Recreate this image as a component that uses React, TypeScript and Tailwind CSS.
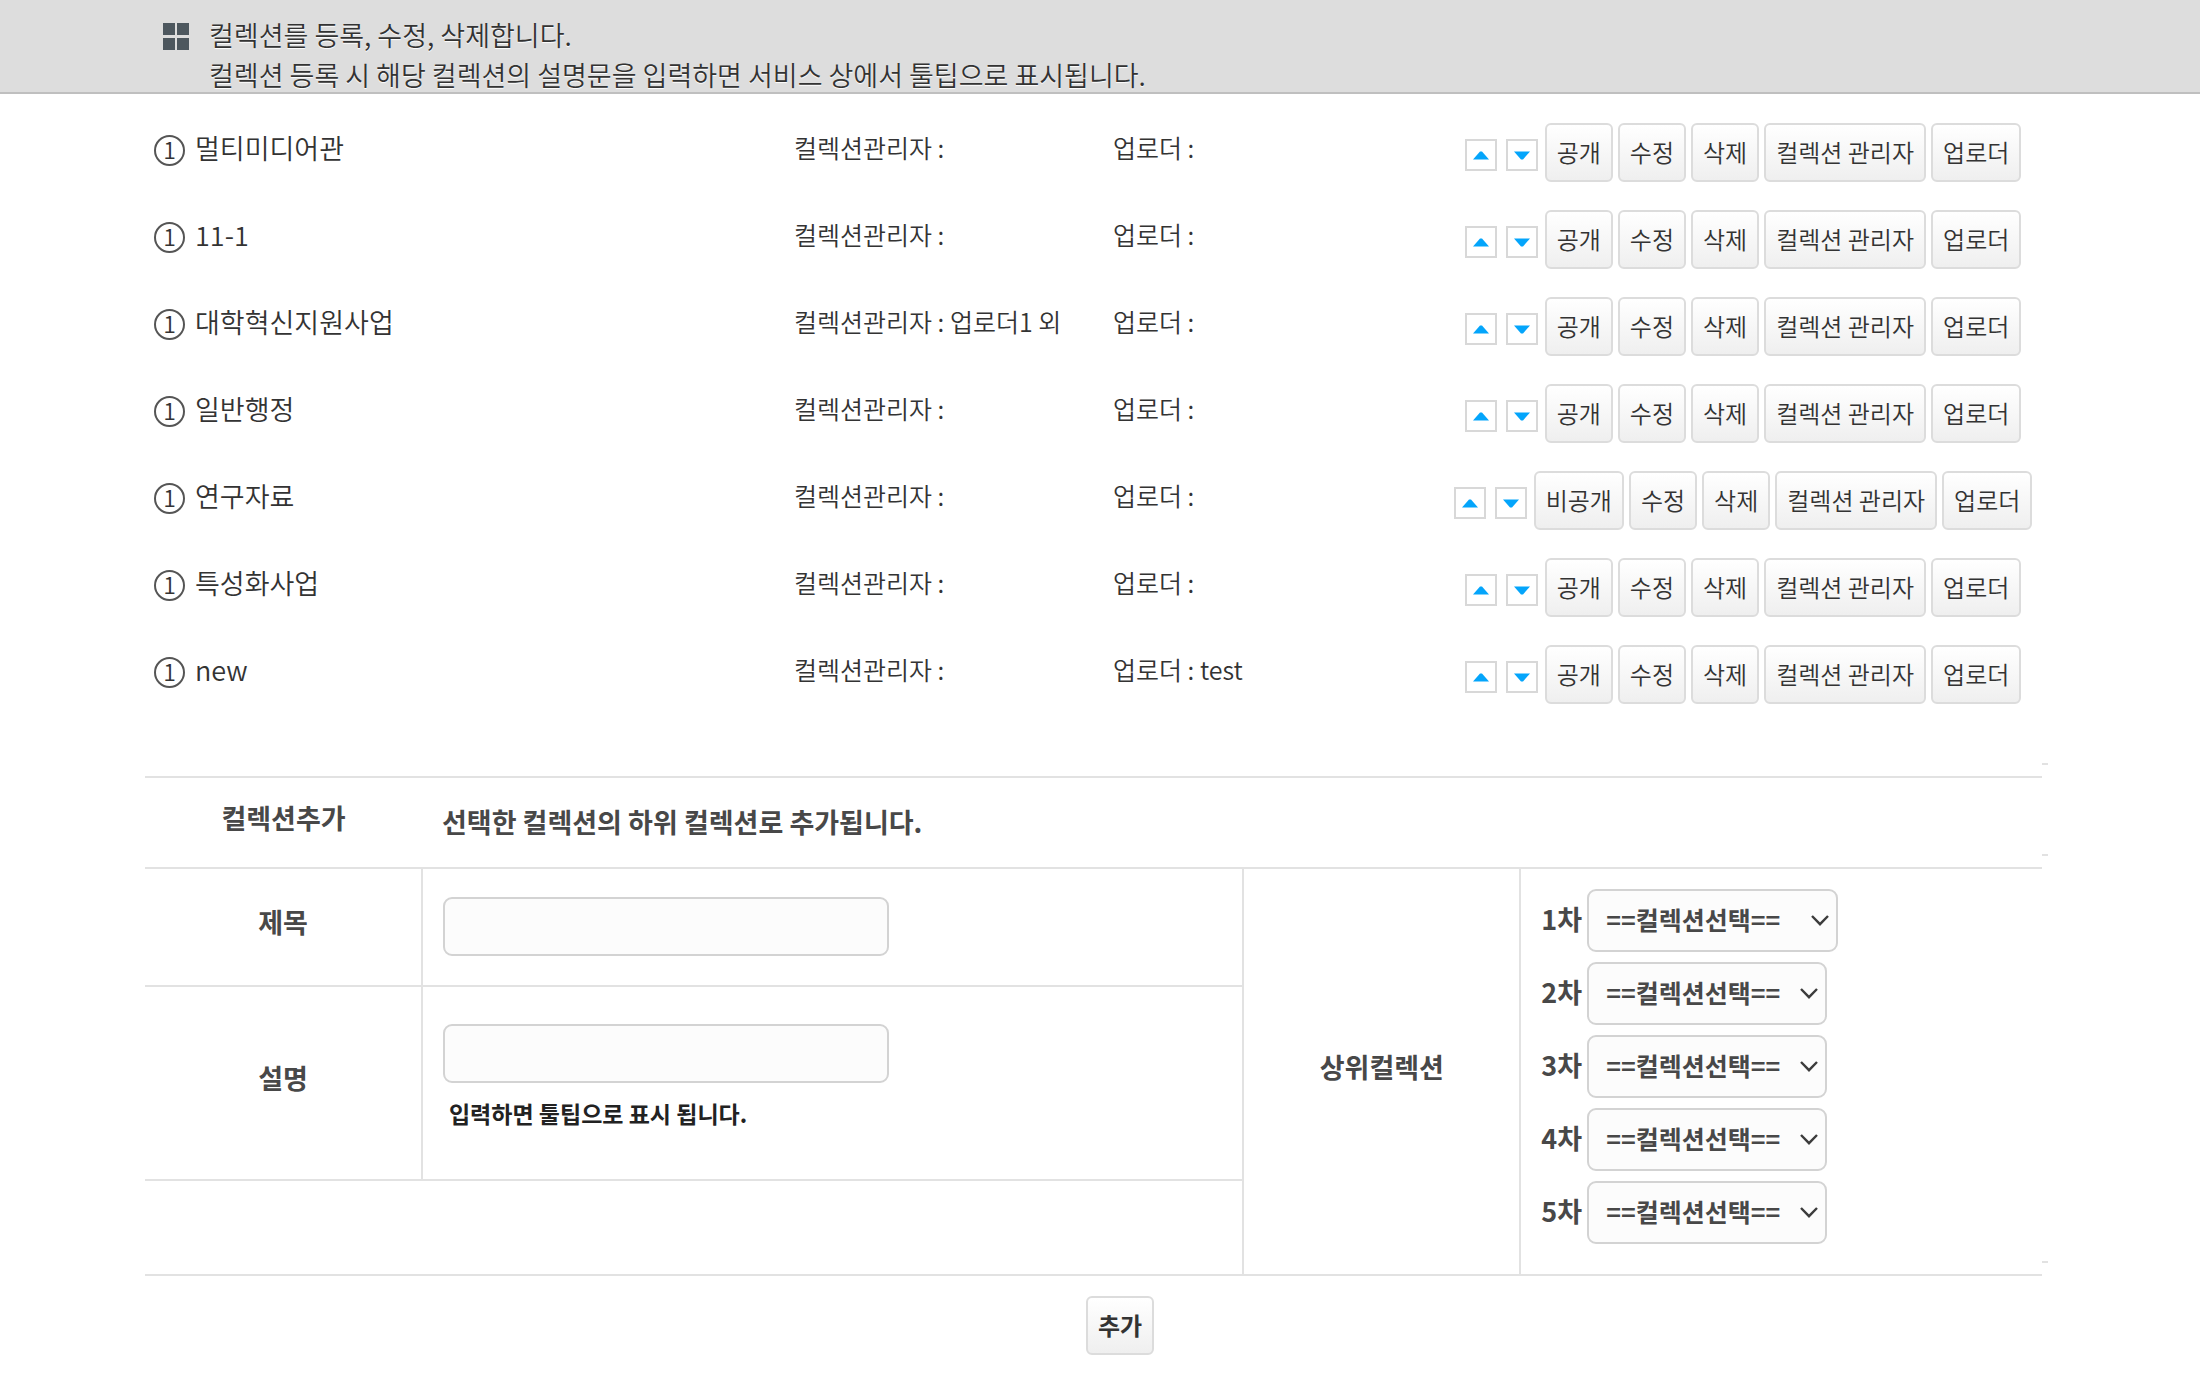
import React from "react";

const rows = [
  { name: "멀티미디어관", manager: "", uploader: "", open: true },
  { name: "11-1", manager: "", uploader: "", open: true },
  { name: "대학혁신지원사업", manager: "업로더1 외", uploader: "", open: true },
  { name: "일반행정", manager: "", uploader: "", open: true },
  { name: "연구자료", manager: "", uploader: "", open: false },
  { name: "특성화사업", manager: "", uploader: "", open: true },
  { name: "new", manager: "", uploader: "test", open: true },
];

function Action({ children, bold = false }: { children: React.ReactNode; bold?: boolean }) {
  return (
    <button
      type="button"
      className={
        "h-[59px] shrink-0 whitespace-nowrap rounded-md border-2 border-[#dcdcdc] bg-linear-to-b from-white to-[#efefef] px-[10px] pb-px text-[24px] leading-[36px] text-[#333] " +
        (bold ? "font-bold" : "font-[350]")
      }
    >
      {children}
    </button>
  );
}

function Arrow({ up, name }: { up: boolean; name: string }) {
  return (
    <button
      type="button"
      aria-label={name + (up ? " 위로" : " 아래로")}
      className="flex size-8 shrink-0 items-center justify-center border-2 border-[#d8d8d8] bg-white"
    >
      <svg viewBox="0 0 16 9" className="h-[9px] w-4 fill-[#04a5fb]">
        <path d={up ? "M7 0.5h2L16 8.5H0z" : "M0 0.5h16L9 8.5H7z"} />
      </svg>
    </button>
  );
}

function ParentSelect({ level }: { level: number }) {
  const id = "parent-" + level;
  return (
    <div className="flex items-center gap-1">
      <label htmlFor={id} className="w-[42px] whitespace-nowrap pb-0.5">
        {level}차
      </label>
      <div className={"relative " + (level === 1 ? "w-[251px]" : "w-[240px]")}>
        <select
          id={id}
          className="block h-[63px] w-full appearance-none rounded-[9px] border-2 border-[#d3d3d3] bg-[#fcfcfc] px-[17px] pb-px text-[25px] font-bold"
        >
          <option>==컬렉션선택==</option>
        </select>
        <svg viewBox="0 0 18 11" className="pointer-events-none absolute right-[9px] top-[26px] h-[11px] w-[18px] fill-none stroke-[#3c3c3c] stroke-[2.4]">
          <path d="M1 1l8 8.2L17 1" />
        </svg>
      </div>
    </div>
  );
}

export default function App() {
  return (
    <div className="min-h-screen bg-white font-['Noto_Sans_CJK_KR',sans-serif] text-[#333]">
      <header className="flex h-[94px] gap-5 overflow-hidden border-b-2 border-[#bfbfbf] bg-[#ddd] pl-[163px] pt-[15px]">
        <svg viewBox="0 0 26 27" className="mt-2 h-[27px] w-[26px] shrink-0 fill-[#4d575e]">
          <path d="M0 0h12v12H0zM14 0h12v12H14zM0 15h12v12H0zM14 15h12v12H14z" />
        </svg>
        <p className="text-[27px] font-[350] leading-[40px] [text-shadow:0_1px_1px_#fff]">
          컬렉션를 등록, 수정, 삭제합니다.
          <br />
          컬렉션 등록 시 해당 컬렉션의 설명문을 입력하면 서비스 상에서 툴팁으로 표시됩니다.
        </p>
      </header>

      <main className="ml-[145px] mr-[158px]">
        <ul className="pt-[15px]">
          {rows.map((r) => (
            <li key={r.name} className="grid h-[87px] grid-cols-[649fr_319fr_331fr_598fr] items-center">
              <div className="flex items-center gap-[10px] pb-2 pl-[9px] text-[27px] font-[350]">
                <span className="mt-1 flex size-[31px] items-center justify-center rounded-full border-2 border-[#555] pb-0.5 text-[23px] leading-none">
                  1
                </span>
                {r.name}
              </div>
              <div className="whitespace-nowrap pb-[9px] text-[25px] font-[350]">컬렉션관리자 : {r.manager}</div>
              <div className="whitespace-nowrap pb-[9px] text-[25px] font-[350]">업로더 : {r.uploader}</div>
              <div className="flex items-center justify-center gap-[7px]">
                <div className="mt-[5px] flex gap-[9px]">
                  <Arrow up name={r.name} />
                  <Arrow up={false} name={r.name} />
                </div>
                <div className="flex gap-[5px]">
                  <Action>{r.open ? "공개" : "비공개"}</Action>
                  <Action>수정</Action>
                  <Action>삭제</Action>
                  <Action>컬렉션 관리자</Action>
                  <Action>업로더</Action>
                </div>
              </div>
            </li>
          ))}
        </ul>

        <form onSubmit={(e) => e.preventDefault()}>
          <div className="-mr-[6px] flex h-[58px] items-end justify-end pb-[11px]">
            <span className="h-0.5 w-[6px] bg-[#e2e2e2]" />
          </div>
          <table className="w-full table-fixed border-collapse text-[27px] font-bold text-[#484848]">
            <colgroup>
              <col className="w-[14.6%]" />
              <col className="w-[43.3%]" />
              <col className="w-[14.6%]" />
              <col />
            </colgroup>
            <tbody>
              <tr className="h-[91px] border-y-2 border-[#e2e2e2]">
                <th scope="row" className="pb-[9px]">컬렉션추가</th>
                <td colSpan={3} className="relative pl-5">
                  선택한 컬렉션의 하위 컬렉션로 추가됩니다.
                  <span className="absolute -right-[6px] bottom-[11px] h-0.5 w-[6px] bg-[#e2e2e2]" />
                </td>
              </tr>
              <tr className="h-[118px]">
                <th scope="row" className="border-b-2 border-r-2 border-[#e2e2e2] pb-[10px]">
                  <label htmlFor="title">제목</label>
                </th>
                <td className="border-b-2 border-[#e2e2e2] pb-0.5 pl-5">
                  <input id="title" type="text" className="block h-[59px] w-[446px] rounded-[9px] border-2 border-[#d3d3d3] bg-[#fcfcfc] px-4" />
                </td>
                <th scope="row" rowSpan={3} className="border-x-2 border-b-2 border-[#e2e2e2] pb-2">
                  상위컬렉션
                </th>
                <td rowSpan={3} className="relative border-b-2 border-[#e2e2e2] pb-[10px] pl-5">
                  <div className="flex flex-col gap-[10px]">
                    <ParentSelect level={1} />
                    <ParentSelect level={2} />
                    <ParentSelect level={3} />
                    <ParentSelect level={4} />
                    <ParentSelect level={5} />
                  </div>
                  <span className="absolute -right-[6px] bottom-[11px] h-0.5 w-[6px] bg-[#e2e2e2]" />
                </td>
              </tr>
              <tr className="h-[194px]">
                <th scope="row" className="border-b-2 border-r-2 border-[#e2e2e2] pb-[10px]">
                  <label htmlFor="description">설명</label>
                </th>
                <td className="border-b-2 border-[#e2e2e2] pb-3 pl-5">
                  <input id="description" type="text" aria-describedby="description-note" className="block h-[59px] w-[446px] rounded-[9px] border-2 border-[#d3d3d3] bg-[#fcfcfc] px-4" />
                  <p id="description-note" className="mt-3 pl-[6px] text-[23px] leading-9 text-[#222]">
                    입력하면 툴팁으로 표시 됩니다.
                  </p>
                </td>
              </tr>
              <tr className="h-[95px]">
                <td colSpan={2} className="border-b-2 border-[#e2e2e2]" />
              </tr>
            </tbody>
          </table>
          <div className="flex justify-center pl-[53px] pt-5">
            <Action bold>추가</Action>
          </div>
        </form>
      </main>
    </div>
  );
}
